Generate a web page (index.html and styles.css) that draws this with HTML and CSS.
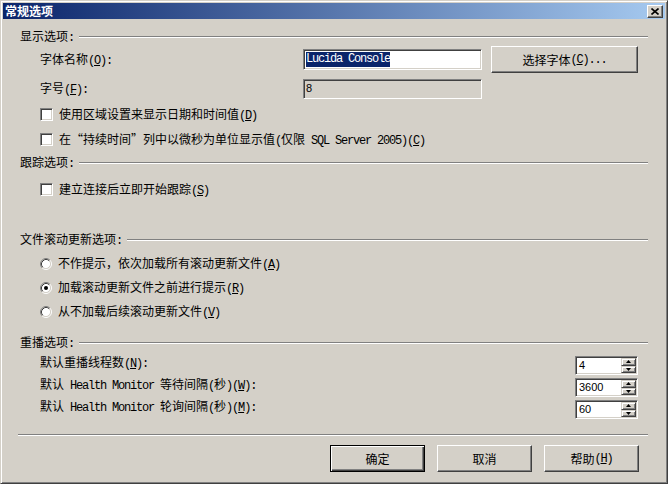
FILE: index.html
```html
<!DOCTYPE html>
<html lang="zh-CN">
<head>
<meta charset="utf-8">
<title>常规选项</title>
<link rel="stylesheet" href="styles.css">
</head>
<body>
<div class="window">
  <div class="titlebar">
    <span class="title">常规选项</span>
    <div class="close">
      <svg width="8" height="7" viewBox="0 0 8 7"><path d="M0.5 0.5L7.5 6.5M7.5 0.5L0.5 6.5" stroke="#000" stroke-width="1.6" fill="none"/></svg>
    </div>
  </div>
  <div class="content">
    <div class="group-head g1"><span class="gl">显示选项<span class="en">:</span></span><div class="etch"></div></div>
    <div class="font-row">
      <span class="lbl fl">字体名称<span class="en">(<u>O</u>):</span></span>
      <div class="field"><span class="sel en">Lucida Console</span></div>
      <div class="btn choose">选择字体<span class="en">(<u>C</u>)...</span></div>
    </div>
    <div class="size-row">
      <span class="lbl fl">字号<span class="en">(<u>F</u>):</span></span>
      <div class="field disabled"><span class="num">8</span></div>
    </div>
    <div class="check-row c1"><div class="cb"></div><span>使用区域设置来显示日期和时间值<span class="en">(<u>D</u>)</span></span></div>
    <div class="check-row c2"><div class="cb"></div><span>在“持续时间”列中以微秒为单位显示值<span class="en">(</span>仅限<span class="en"> SQL Server 2005)(<u>C</u>)</span></span></div>

    <div class="group-head g2"><span class="gl">跟踪选项<span class="en">:</span></span><div class="etch"></div></div>
    <div class="check-row c3"><div class="cb"></div><span>建立连接后立即开始跟踪<span class="en">(<u>S</u>)</span></span></div>

    <div class="group-head g3"><span class="gl">文件滚动更新选项<span class="en">:</span></span><div class="etch"></div></div>
    <div class="radios">
      <div class="radio-row">
        <svg class="rb" width="12" height="12" viewBox="0 0 12 12"><circle cx="6" cy="6" r="4.5" fill="#fff"/><path d="M2.11 9.89A5.5 5.5 0 0 1 9.89 2.11" stroke="#808080" fill="none"/><path d="M9.89 2.11A5.5 5.5 0 0 1 2.11 9.89" stroke="#fff" fill="none"/><path d="M2.82 9.18A4.5 4.5 0 0 1 9.18 2.82" stroke="#404040" fill="none"/><path d="M9.18 2.82A4.5 4.5 0 0 1 2.82 9.18" stroke="#d4d0c8" fill="none"/></svg>
        <span>不作提示，依次加载所有滚动更新文件<span class="en">(<u>A</u>)</span></span>
      </div>
      <div class="radio-row">
        <svg class="rb" width="12" height="12" viewBox="0 0 12 12"><circle cx="6" cy="6" r="4.5" fill="#fff"/><path d="M2.11 9.89A5.5 5.5 0 0 1 9.89 2.11" stroke="#808080" fill="none"/><path d="M9.89 2.11A5.5 5.5 0 0 1 2.11 9.89" stroke="#fff" fill="none"/><path d="M2.82 9.18A4.5 4.5 0 0 1 9.18 2.82" stroke="#404040" fill="none"/><path d="M9.18 2.82A4.5 4.5 0 0 1 2.82 9.18" stroke="#d4d0c8" fill="none"/><circle cx="6" cy="6" r="2" fill="#000"/></svg>
        <span>加载滚动更新文件之前进行提示<span class="en">(<u>R</u>)</span></span>
      </div>
      <div class="radio-row">
        <svg class="rb" width="12" height="12" viewBox="0 0 12 12"><circle cx="6" cy="6" r="4.5" fill="#fff"/><path d="M2.11 9.89A5.5 5.5 0 0 1 9.89 2.11" stroke="#808080" fill="none"/><path d="M9.89 2.11A5.5 5.5 0 0 1 2.11 9.89" stroke="#fff" fill="none"/><path d="M2.82 9.18A4.5 4.5 0 0 1 9.18 2.82" stroke="#404040" fill="none"/><path d="M9.18 2.82A4.5 4.5 0 0 1 2.82 9.18" stroke="#d4d0c8" fill="none"/></svg>
        <span>从不加载后续滚动更新文件<span class="en">(<u>V</u>)</span></span>
      </div>
    </div>

    <div class="group-head g4"><span class="gl">重播选项<span class="en">:</span></span><div class="etch"></div></div>
    <div class="spins">
      <div class="spin-row">
        <span class="lbl">默认重播线程数<span class="en">(<u>N</u>):</span></span>
        <div class="spin"><span class="num">4</span><div class="spinbtns"><div class="sb"><svg width="5" height="3" viewBox="0 0 5 3"><path d="M2.5 0L5 3H0z"/></svg></div><div class="sb"><svg width="5" height="3" viewBox="0 0 5 3"><path d="M0 0H5L2.5 3z"/></svg></div></div></div>
      </div>
      <div class="spin-row">
        <span class="lbl">默认<span class="en"> Health Monitor </span>等待间隔<span class="en">(</span>秒<span class="en">)(<u>W</u>):</span></span>
        <div class="spin"><span class="num">3600</span><div class="spinbtns"><div class="sb"><svg width="5" height="3" viewBox="0 0 5 3"><path d="M2.5 0L5 3H0z"/></svg></div><div class="sb"><svg width="5" height="3" viewBox="0 0 5 3"><path d="M0 0H5L2.5 3z"/></svg></div></div></div>
      </div>
      <div class="spin-row">
        <span class="lbl">默认<span class="en"> Health Monitor </span>轮询间隔<span class="en">(</span>秒<span class="en">)(<u>M</u>):</span></span>
        <div class="spin"><span class="num">60</span><div class="spinbtns"><div class="sb"><svg width="5" height="3" viewBox="0 0 5 3"><path d="M2.5 0L5 3H0z"/></svg></div><div class="sb"><svg width="5" height="3" viewBox="0 0 5 3"><path d="M0 0H5L2.5 3z"/></svg></div></div></div>
      </div>
    </div>

    <div class="sep"></div>
    <div class="btn-row">
      <div class="btn default">确定</div>
      <div class="btn">取消</div>
      <div class="btn">帮助<span class="en">(<u>H</u>)</span></div>
    </div>
  </div>
</div>
</body>
</html>
```
FILE: styles.css
```css
html, body {
  margin: 0;
  background: #d4d0c8;
}
body {
  font-family: "Noto Sans CJK SC", "Liberation Sans", sans-serif;
  font-size: 12px;
  line-height: 14px;
  color: #000;
}
.en {
  font-family: "Liberation Mono", monospace;
  font-size: 12px;
  letter-spacing: -1.2px;
}
u {
  text-decoration: underline;
}
.window {
  width: 668px;
  height: 484px;
  box-sizing: border-box;
  border: 1px solid;
  border-color: #d4d0c8 #404040 #404040 #d4d0c8;
  box-shadow: inset 1px 1px #fff, inset -1px -1px #808080;
  padding: 2px;
  display: flex;
  flex-direction: column;
}
.titlebar {
  height: 16px;
  flex: none;
  background: linear-gradient(to right, #0a246a, #a6caf0);
  display: flex;
  align-items: center;
  justify-content: space-between;
  padding: 0 2px;
}
.title {
  color: #fff;
  font-weight: bold;
  line-height: 14px;
}
.close {
  width: 16px;
  height: 13px;
  box-sizing: border-box;
  background: #d4d0c8;
  border: 1px solid;
  border-color: #fff #404040 #404040 #fff;
  box-shadow: inset -1px -1px #808080;
  display: flex;
  align-items: center;
  justify-content: center;
  margin-top: 1px;
}
.content {
  padding: 0 17px;
}
.group-head {
  display: flex;
  align-items: center;
  gap: 5px;
  height: 16px;
}
.etch {
  flex: 1;
  height: 0;
  border-top: 1px solid #808080;
  border-bottom: 1px solid #fff;
}
.g1 { margin-top: 10px; }
.g2 { margin-top: 7px; }
.g3 { margin-top: 34px; }
.g4 { margin-top: 11px; }

.font-row, .size-row {
  display: flex;
  align-items: center;
  padding-left: 20px;
}
.fl {
  width: 263px;
  flex: none;
}
.font-row {
  height: 27px;
  margin-top: 1px;
}
.size-row {
  height: 21px;
  margin-top: 5px;
}
.field {
  width: 179px;
  flex: none;
  height: 21px;
  box-sizing: border-box;
  border: 1px solid;
  border-color: #808080 #fff #fff #808080;
  box-shadow: inset 1px 1px #404040, inset -1px -1px #d4d0c8;
  background: #fff;
  padding: 0 2px;
  display: flex;
  align-items: center;
}
.field.disabled {
  height: 20px;
  background: #d4d0c8;
}
.choose {
  width: 147px;
  flex: none;
  margin-left: 9px;
}
.sel {
  background: #0a246a;
  color: #fff;
  line-height: 15px;
}
.num {
  font-family: "Liberation Sans", sans-serif;
  font-size: 11px;
  line-height: 15px;
}
.btn {
  height: 27px;
  box-sizing: border-box;
  border: 1px solid;
  border-color: #fff #404040 #404040 #fff;
  box-shadow: inset -1px -1px #808080;
  background: #d4d0c8;
  display: flex;
  align-items: center;
  justify-content: center;
}
.btn.default {
  border-color: #000;
  box-shadow: inset 1px 1px #fff, inset -1px -1px #404040, inset -2px -2px #808080;
}

.check-row {
  display: flex;
  align-items: center;
  gap: 6px;
  height: 17px;
  padding-left: 20px;
}
.c1 { margin-top: 7px; }
.c2 { margin-top: 8px; }
.c3 { margin-top: 10px; }
.cb {
  width: 13px;
  height: 13px;
  box-sizing: border-box;
  border: 1px solid;
  border-color: #808080 #fff #fff #808080;
  box-shadow: inset 1px 1px #404040, inset -1px -1px #d4d0c8;
  background: #fff;
  flex: none;
}

.radios {
  margin-top: 4px;
}
.radio-row {
  display: flex;
  align-items: center;
  gap: 6px;
  height: 24px;
  padding-left: 20px;
}
.rb {
  flex: none;
}

.spins {
  margin-top: 5px;
  display: flex;
  flex-direction: column;
  gap: 3px;
}
.spin-row {
  display: flex;
  justify-content: space-between;
  align-items: flex-start;
  height: 19px;
  padding-left: 20px;
  padding-right: 10px;
}
.spin-row .lbl {
  margin-top: -1px;
}
.spin {
  width: 63px;
  height: 19px;
  box-sizing: border-box;
  border: 1px solid;
  border-color: #808080 #fff #fff #808080;
  box-shadow: inset 1px 1px #404040, inset -1px -1px #d4d0c8;
  background: #fff;
  padding: 1px;
  display: flex;
  justify-content: space-between;
}
.spin .num {
  padding-left: 2px;
}
.spinbtns {
  width: 15px;
  display: flex;
  flex-direction: column;
}
.sb {
  flex: 1;
  box-sizing: border-box;
  background: #d4d0c8;
  border: 1px solid;
  border-color: #d4d0c8 #404040 #404040 #d4d0c8;
  box-shadow: inset 1px 1px #fff, inset -1px -1px #808080;
  display: flex;
  align-items: center;
  justify-content: center;
}

.sep {
  margin-top: 15px;
  margin-left: -2px;
  border-top: 1px solid #808080;
  border-bottom: 1px solid #fff;
}
.btn-row {
  margin-top: 9px;
  display: flex;
  justify-content: flex-end;
  gap: 12px;
  padding-right: 9px;
}
.btn-row .btn {
  width: 95px;
}
```
